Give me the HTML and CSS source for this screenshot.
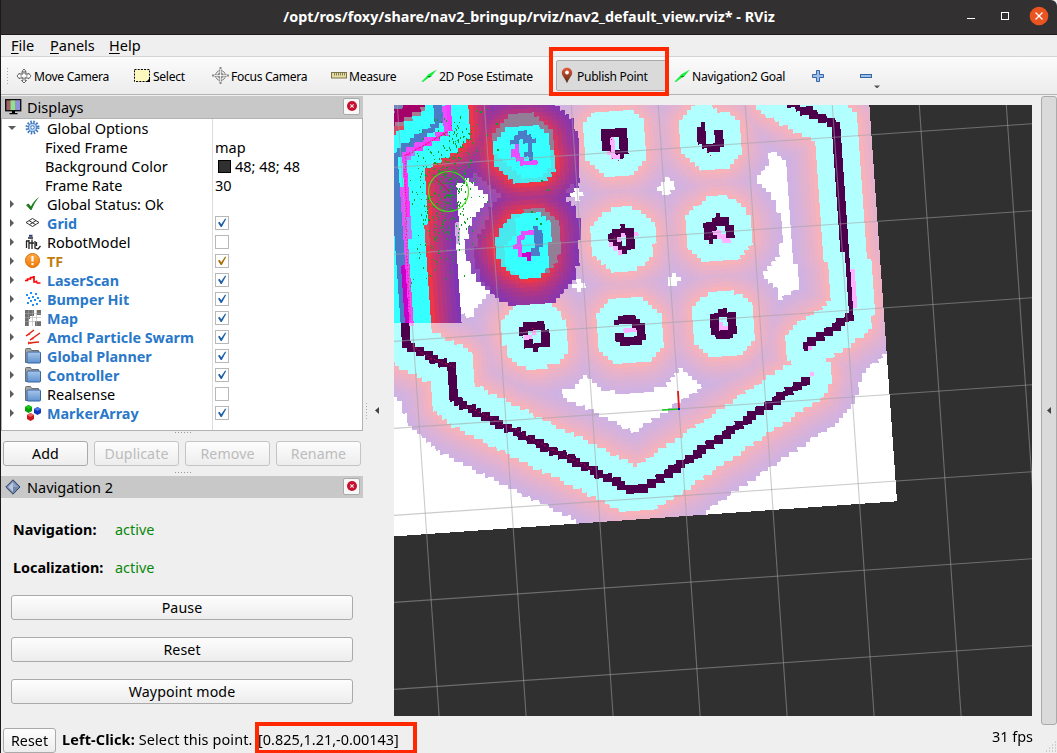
FILE: index.html
```html
<!DOCTYPE html>
<html lang="en">
<head>
<meta charset="utf-8">
<title>RViz</title>
<link rel="stylesheet" href="styles.css">
</head>
<body>
<svg class="defs" width="0" height="0" aria-hidden="true">
  <defs>
    <linearGradient id="pinFill" x1="0" y1="0" x2="0" y2="1"><stop offset="0" stop-color="#e5593c"/><stop offset="1" stop-color="#4e2a12"/></linearGradient>
    <linearGradient id="folderFill" x1="0" y1="0" x2="0" y2="1"><stop offset="0" stop-color="#a9c6ea"/><stop offset="1" stop-color="#5f92cf"/></linearGradient>
    <linearGradient id="tfFill" x1="0" y1="0" x2="0" y2="1"><stop offset="0" stop-color="#ffab4a"/><stop offset="1" stop-color="#f07800"/></linearGradient>
    <symbol id="folder" viewBox="0 0 16 16"><path d="M.5 14.5V1.5q0-1 1-1h4l1 2h7v12z" fill="#a5a7a2" stroke="#6c6e6a"/><rect x="2" y="4" width="13.5" height="11" rx="1" fill="url(#folderFill)" stroke="#3465a4"/></symbol>
    <symbol id="pose" viewBox="0 0 16 14"><path d="M.5 12.5 6 7l1-1.5L16 .5 10.500 7 8 8.500 2 13z" fill="#12f03c"/><path d="M6 7l4.500 0-2 1.500z" fill="#0b7a20"/></symbol>
    <symbol id="tick" viewBox="0 0 10 10"><path d="M1 4.800 2.600 3.800 4.200 6.300 8 .8h1.300L4.800 9H3.700z" fill="currentColor"/></symbol>
    <symbol id="close" viewBox="0 0 10 10"><circle cx="5" cy="5" r="5" fill="#c8102e"/><path d="M3.300 3.300l3.400 3.400M6.700 3.300L3.300 6.700" stroke="#f5dede" stroke-width="1.200"/></symbol>
  </defs>
</svg>
<div class="window">
  <header class="titlebar">
    <div class="title">/opt/ros/foxy/share/nav2_bringup/rviz/nav2_default_view.rviz* - RViz</div>
    <svg class="window-buttons" width="90" height="34" viewBox="0 0 90 34">
      <path d="M0 18.500h8" stroke="#fff"/><rect x="34.500" y="12.500" width="7" height="7" fill="none" stroke="#fff"/>
      <circle cx="72" cy="16" r="9.300" fill="#e95420"/><path d="M68.500 12.500l7 7M75.500 12.500l-7 7" stroke="#fff" stroke-width="1.300"/>
    </svg>
  </header>
  <nav class="menubar"><span class="m-file"><u>F</u>ile</span><span class="m-panels"><u>P</u>anels</span><span><u>H</u>elp</span></nav>
  <div class="toolbar">
    <i class="grip"></i>
    <div class="tool t-move"><svg width="16" height="16" viewBox="0 0 16 16"><path d="M8 1l2 2.500H9V6h3.500V5L15 8l-2.500 3v-1H9v2.500h1.500L8 15l-2.500-2.500H7V10H3.500v1L1 8l2.500-3v1H7V3.500H6z" fill="#fff" stroke="#555" stroke-width=".9"/><circle cx="8" cy="7" r="3.200" fill="none" stroke="#777" stroke-width=".8"/></svg><span>Move Camera</span></div>
    <div class="tool t-select"><svg width="17" height="14" viewBox="0 0 17 14"><rect x=".5" y=".5" width="15" height="12" fill="#fdf8bd" stroke="#000" stroke-dasharray="2 1.200"/><path d="M16 9v4h-4z"/></svg><span>Select</span></div>
    <div class="tool t-focus"><svg width="17" height="17" viewBox="0 0 17 17"><circle cx="8.500" cy="8.500" r="5" fill="#e6e6e6" stroke="#888"/><circle cx="8.500" cy="8.500" r="2.500" fill="none" stroke="#777"/><path d="M8.500 0v17M0 8.500h17" stroke="#888" stroke-width="2"/><path d="M8.500 2v13M2 8.500h13" stroke="#fff" stroke-width=".8"/></svg><span>Focus Camera</span></div>
    <div class="tool t-measure"><svg width="16" height="7" viewBox="0 0 16 7"><rect x=".5" y=".5" width="15" height="5.500" fill="#e8dda0" stroke="#7b754c"/><path d="M3.500 1v2.500M5.500 1v2.500M7.500 1v2.500M9.500 1v2.500M11.500 1v2.500M13.500 1v2.500" stroke="#6d6745" stroke-width=".8"/></svg><span>Measure</span></div>
    <div class="tool t-pose"><svg width="16" height="14"><use href="#pose"/></svg><span>2D Pose Estimate</span></div>
    <div class="tool t-publish"><svg width="12" height="17" viewBox="0 0 12 17"><path d="M6 .8c-3 0-5.200 2.200-5.200 5C.8 9 4.500 12 6 16.200 7.500 12 11.200 9 11.200 5.800c0-2.800-2.200-5-5.200-5z" fill="url(#pinFill)"/><circle cx="6" cy="5.500" r="1.900" fill="#fff"/></svg><span>Publish Point</span></div>
    <div class="tool t-goal"><svg width="16" height="14"><use href="#pose"/></svg><span>Navigation2 Goal</span></div>
    <svg class="t-plus" width="12" height="12" viewBox="0 0 12 12"><path d="M4.500.5h3v4h4v3h-4v4h-3v-4h-4v-3h4z" fill="#9dbfe8" stroke="#3465a4"/></svg>
    <svg class="t-minus" width="22" height="24" viewBox="0 0 22 24"><rect x=".5" y="10.500" width="11" height="3" fill="#9dbfe8" stroke="#3465a4"/><path d="M14 21.500h6l-3 3z" fill="#555"/></svg>
  </div>
  <main class="workspace">
    <aside class="docks">
      <div class="dock-title"><svg width="17" height="16" viewBox="0 0 17 16"><rect x=".7" y=".7" width="15" height="11" fill="#9f6262" stroke="#111" stroke-width="1.400"/><path d="M5.500 1.400h5v9.600h-5z" fill="#92df90"/><path d="M10.500 1.400H15V11h-4.500z" fill="#8f91df"/><path d="M7 12h3v2h2.500v1.300h-8V14H7z"/></svg><span>Displays</span><b class="close"><svg width="10" height="10"><use href="#close"/></svg></b></div>
      <div class="tree">
        <div class="row"><i class="open"></i><svg class="ic" viewBox="0 0 16 16"><circle cx="7.500" cy="7.500" r="5.700" fill="none" stroke="#3d78c0" stroke-width="2.600" stroke-dasharray="1.500 1.500"/><circle cx="7.500" cy="7.500" r="4.200" fill="#bcd4f0" stroke="#3d78c0"/><circle cx="7.500" cy="7.500" r="1.700" fill="#fff" stroke="#3d78c0"/></svg><span class="name">Global Options</span></div>
        <div class="row sub"><span class="name">Fixed Frame</span><span class="val">map</span></div>
        <div class="row sub"><span class="name">Background Color</span><span class="val"><i class="swatch"></i>48; 48; 48</span></div>
        <div class="row sub"><span class="name">Frame Rate</span><span class="val">30</span></div>
        <div class="row"><i class="shut"></i><svg class="ic" viewBox="0 0 16 16"><path d="M1 9l2.500-1.500L6 10.500Q8.500 5 14 1 9 7 6.500 14H5.500z" fill="#1e7a1e"/></svg><span class="name">Global Status: Ok</span></div>
        <div class="row on"><i class="shut"></i><svg class="ic" viewBox="0 0 16 16"><path d="M1 7.500L7.500 3.500 14 7.500 7.500 11.500zM4 5.600l6.500 4M11 5.600l-6.500 4" fill="none" stroke="#333"/></svg><span class="name">Grid</span><b class="check"><svg><use href="#tick"/></svg></b></div>
        <div class="row"><i class="shut"></i><svg class="ic" viewBox="0 0 16 16"><path d="M4 .8h3.500v2H4z" fill="#27417a"/><path d="M3 4h5M1.500 7v7M4 6v9M1 7h3M7 5.500V15M4 9h5M10 7v7l3 1 2.500-3M11.500 8v4" fill="none" stroke="#222" stroke-width="1.300"/></svg><span class="name">RobotModel</span><b class="check"></b></div>
        <div class="row warn"><i class="shut"></i><svg class="ic" viewBox="0 0 16 16"><circle cx="7.500" cy="7.500" r="7" fill="url(#tfFill)" stroke="#d96c00"/><path d="M7.500 3v5.500M7.500 10v2.200" stroke="#fff" stroke-width="2.200"/></svg><span class="name">TF</span><b class="check"><svg><use href="#tick"/></svg></b></div>
        <div class="row on"><i class="shut"></i><svg class="ic" viewBox="0 0 16 16"><path d="M0 8.500h2.500V7h3V5.500h3V4M9 4v6h2.500V8.500M11.500 11h4" fill="none" stroke="#f00" stroke-width="1.700"/></svg><span class="name">LaserScan</span><b class="check"><svg><use href="#tick"/></svg></b></div>
        <div class="row on"><i class="shut"></i><svg class="ic" viewBox="0 0 16 16"><path d="M5 1h2v2H5zM10 2h2v2h-2zM1 3h2v2H1zM7 5h2v2H7zM3 6h2v2H3zM12 6h2v2h-2zM9 8h2v2H9zM14 9h2v2h-2zM5 9h2v2H5zM2 11h2v2H2zM7 13h2v2H7zM11 12h2v2h-2z" fill="#1e90f5"/></svg><span class="name">Bumper Hit</span><b class="check"><svg><use href="#tick"/></svg></b></div>
        <div class="row on"><i class="shut"></i><svg class="ic" viewBox="0 0 16 16"><path d="M0 0h16v16H0z" fill="#fff"/><path d="M0 0h9v6H5v3H4v7H0zM12 0h4v5h-4zM10 11h6v5h-6z" fill="#6e6e6e"/><path d="M3.500 0v16M7.500 0v16M11.500 0v16M0 3.500h16M0 7.500h16M0 11.500h16" stroke="#aaa" stroke-opacity=".5"/></svg><span class="name">Map</span><b class="check"><svg><use href="#tick"/></svg></b></div>
        <div class="row on"><i class="shut"></i><svg class="ic" viewBox="0 0 16 16"><path d="M1 7l8-6M5 11l10-7M3 14l11-1" stroke="#dc2412" stroke-width="1.500"/><path d="M1.500 7l4-1.500-1-1.500zM5 11.500l4-1.500-1-2zM3 12.500v3l5-1.500z" fill="#ee3520"/></svg><span class="name">Amcl Particle Swarm</span><b class="check"><svg><use href="#tick"/></svg></b></div>
        <div class="row on"><i class="shut"></i><svg class="ic"><use href="#folder"/></svg><span class="name">Global Planner</span><b class="check"><svg><use href="#tick"/></svg></b></div>
        <div class="row on"><i class="shut"></i><svg class="ic"><use href="#folder"/></svg><span class="name">Controller</span><b class="check"><svg><use href="#tick"/></svg></b></div>
        <div class="row"><i class="shut"></i><svg class="ic"><use href="#folder"/></svg><span class="name">Realsense</span><b class="check"></b></div>
        <div class="row on"><i class="shut"></i><svg class="ic" viewBox="0 0 16 16"><path d="M0 2l3.500-2L7 2v4L3.500 8 0 6z" fill="#0a9d0a"/><path d="M0 2l3.500-2L7 2 3.500 4z" fill="#17c817"/><path d="M9 4l3.500-2L16 4v4l-3.500 2L9 8z" fill="#1436b8"/><path d="M9 4l3.500-2L16 4l-3.500 2z" fill="#4778e8"/><path d="M2 10l3.500-2L9 10v4l-3.500 2L2 14z" fill="#c81818"/><path d="M2 10l3.500-2L9 10l-3.500 2z" fill="#f06060"/></svg><span class="name">MarkerArray</span><b class="check"><svg><use href="#tick"/></svg></b></div>
      </div>
      <i class="hgrip"></i>
      <div class="actions"><button>Add</button><button disabled>Duplicate</button><button disabled>Remove</button><button disabled>Rename</button></div>
      <i class="hgrip second"></i>
      <div class="dock-title"><svg width="17" height="16" viewBox="0 0 17 16"><path d="M.8 8L8 .8 15 8 8 15.200z" fill="#7186ad" stroke="#34435f"/><path d="M3 8l5-5v10z" fill="#b9c8df"/><path d="M8 3l5 5H8z" fill="#8fa4c8"/></svg><span>Navigation 2</span><b class="close"><svg width="10" height="10"><use href="#close"/></svg></b></div>
      <section class="nav-panel">
        <div class="state"><b>Navigation:</b><span>active</span></div>
        <div class="state"><b>Localization:</b><span>active</span></div>
        <button>Pause</button><button>Reset</button><button>Waypoint mode</button>
      </section>
    </aside>
    <div class="splitter"><i class="grip"></i><i class="arrow"></i></div>
    <canvas class="view" id="view" width="638" height="611"></canvas>
    <div class="right-rail"><i class="arrow"></i></div>
  </main>
  <footer class="statusbar"><button>Reset</button><span class="hint"><b>Left-Click:</b> Select this point.</span><span class="coords">[0.825,1.21,-0.00143]</span><span class="fps">31 fps</span></footer>
  <div class="mark mark-tool"></div>
  <div class="mark mark-coords"></div>
  <svg class="sizegrip" width="12" height="12" viewBox="0 0 12 12"><path d="M10 1h1M7 4h1M10 4h1M4 7h1M7 7h1M10 7h1M1 10h1M4 10h1M7 10h1M10 10h1" stroke="#aaa"/></svg>
</div>
<script src="map.js"></script>
</body>
</html>
```
FILE: styles.css
```css
* { box-sizing: border-box; }
body { margin: 0; font: 14.5px/19px "Noto Sans", sans-serif; color: #000; }
.defs { position: absolute; }
.window { position: relative; width: 1057px; height: 753px; display: flex; flex-direction: column; overflow: hidden; background: #efefef; border-left: 1px solid #1c1a1c; }
.titlebar { position: relative; flex: none; height: 35px; background: #333031; border-bottom: 1px solid #1d1b1c; border-top-right-radius: 6px; display: flex; justify-content: center; }
.title { color: #fff; font-weight: 700; font-size: 14.35px; line-height: 33px; white-space: nowrap; }
.window-buttons { position: absolute; right: 0; top: 0; }
.menubar { flex: none; height: 22px; border-bottom: 1px solid #d4d4d4; display: flex; gap: 15px; padding-left: 10px; line-height: 20px; }
.menubar u { text-decoration-thickness: 1px; text-underline-offset: 2px; }
.m-file { width: 24px; }
.m-panels { width: 44px; }
.toolbar { flex: none; height: 38px; background: linear-gradient(#fbfbfb, #ececec); border-bottom: 1px solid #b5b5b5; display: flex; align-items: center; padding-left: 5px; font-size: 12.1px; letter-spacing: -0.3px; white-space: nowrap; }
.grip { width: 4px; height: 17px; background: radial-gradient(circle, #aaa 0.7px, transparent 0.9px) 0 0 / 3px 3px; }
.tool { display: flex; align-items: center; gap: 2px; flex: none; }
.tool svg { flex: none; }
.tool span { padding-top: 1px; }
.t-move { width: 118px; margin-left: 6px; }
.t-select { width: 78px; }
.t-focus { width: 119px; }
.t-measure { width: 90px; }
.t-pose { width: 135px; }
.t-publish { width: 112px; height: 31px; padding-left: 4px; gap: 4px; background: #dadada; border: 1px solid #aaa; border-radius: 2px; }
.t-goal { margin-left: 6px; width: 138px; }
.t-plus { flex: none; }
.t-minus { flex: none; margin-left: 36px; }
.workspace { flex: none; height: 630px; display: flex; padding-top: 1px; }
.docks { width: 362px; display: flex; flex-direction: column; }
.dock-title { flex: none; height: 22px; background: #c8c8c8; display: flex; align-items: center; padding-left: 4px; gap: 5px; }
.close { margin: 0 3px 2px auto; width: 17px; height: 17px; border: 1px solid #aaa; border-radius: 2px; background: #f8f8f8; display: grid; place-items: center; }
.tree { flex: none; height: 313px; border: 1px solid #b2b2b2; background: linear-gradient(#dcdcdc, #dcdcdc) 210px 0 / 1px 100% no-repeat #fff; }
.row { height: 19px; display: flex; align-items: center; padding-left: 6px; white-space: nowrap; }
.open, .shut { width: 8px; height: 8px; flex: none; margin: 0 9px 1px 0; }
.open { background: #5c5c5c; clip-path: polygon(0 25%, 100% 25%, 50% 75%); }
.shut { background: #5c5c5c; clip-path: polygon(25% 0, 75% 50%, 25% 100%); }
.ic { width: 16px; height: 16px; flex: none; margin-bottom: 1px; }
.name { width: 167px; margin-left: 6px; flex: none; }
.sub { padding-left: 37px; }
.row.on .name, .row.warn .name { font-weight: 700; color: #2a78c8; font-size: 14.35px; }
.row.warn .name { color: #c08010; }
.val { display: flex; align-items: center; padding-left: 3px; }
.swatch { width: 13px; height: 13px; margin: 0 4px 0 3px; border: 1px solid #000; background: #303030; }
.check { width: 14px; height: 14px; margin: 0 0 2px 1px; border: 1px solid #b8b8b8; background: #fff; color: #1c60a8; display: grid; place-items: center; }
.warn .check { color: #a67000; }
.check svg { width: 10px; height: 10px; }
.hgrip { flex: none; align-self: center; width: 17px; height: 2px; background: radial-gradient(circle, #999 0.6px, transparent 0.9px) 0 0 / 3px 3px; }
.actions { flex: none; display: flex; gap: 6px; padding-left: 2px; margin-top: 8px; height: 25px; }
.second { margin: 5px 0 3px; }
button { height: 25px; padding: 0; border: 1px solid #aaa; border-radius: 3px; background: linear-gradient(#fdfdfd, #ededed); color: #000; font: inherit; font-size: 14.2px; letter-spacing: 0.1px; }
.actions button { width: 85px; }
button:disabled { color: #bcbcbc; border-color: #c4c4c4; }
.nav-panel { padding: 12px 10px 0 10px; display: flex; flex-direction: column; }
.state { height: 38px; display: flex; align-items: center; font-size: 14.4px; padding-left: 2px; }
.state b { width: 102px; }
.state span { color: #0a870a; }
.nav-panel button { margin: 9px 0 8px; flex: none; }
.splitter { width: 31px; display: flex; align-items: center; padding-left: 2px; gap: 4px; }
.arrow { width: 4px; height: 7px; background: #444; clip-path: polygon(100% 0, 100% 100%, 0 50%); }
.splitter .arrow { margin-left: 2px; }
.view { display: block; width: 638px; height: 611px; margin-top: 9px; }
.right-rail { margin-left: 9px; width: 16px; height: 629px; border: 1px solid #aaa; border-radius: 3px; background: #dadada; display: flex; align-items: center; padding-left: 5px; }
.statusbar { flex: none; height: 28px; display: flex; padding: 3px 0 0 2px; line-height: 23px; font-size: 14.45px; white-space: nowrap; }
.statusbar button { width: 53px; flex: none; }
.hint { margin-left: 6px; width: 196px; flex: none; letter-spacing: 0.12px; }
.fps { margin-left: auto; margin-right: 24px; margin-top: -3px; }
.mark { position: absolute; border: 4px solid #ff2800; }
.mark-tool { left: 548px; top: 47px; width: 120px; height: 49px; }
.mark-coords { left: 254px; top: 722px; width: 162px; height: 32px; }
.sizegrip { position: absolute; right: 0; bottom: 0; }
```
FILE: map.js
```js
// Costmap view: cells rotated against the screen, coloured by distance to obstacles.
const canvas = document.getElementById('view');
const ctx = canvas.getContext('2d');
const OX = 394, OY = 105, W = 638, H = 611, CELL = 4.35, COLS = 134, ROWS = 128;
const corner = [897, 501.3], ux = -0.9976, uy = 0.0696, vx = -0.0696, vy = -0.9976;

const wall = (w, ...p) => ({ w, p });
const mapLines = [
  wall(3.2, 437,90, 438,125, 404,147, 395,157, 397,220, 404,323, 406,343),
  wall(4.1, 406,343, 412,348, 452,367, 454,398, 464,406, 628,488, 645,488, 682,464, 760,411, 808,379),
  wall(4, 776,95, 797,107, 812,113, 833,124, 838,130),
  wall(4.3, 837,128, 840,195, 843,240),
  wall(2.9, 844,240, 848,275, 850,315),
  wall(4, 849,317, 829,331, 805,345),
  wall(4.1, 606,147, 606,134, 615,131, 625,133, 625,147, 620,153),
  wall(4, 701,128, 702,141, 709,148), wall(4, 709,147, 718,146, 721,140, 720,132),
  wall(4.1, 613,240, 614,235, 622,230, 631,230, 632,244, 624,249, 617,243),
  wall(4.1, 707,227, 707,237, 713,238), wall(4.1, 714,226, 718,218, 727,222, 729,236),
  wall(4, 523,333, 528,326, 540,325, 544,333, 545,344, 535,346, 529,344),
  wall(4, 619,321, 629,319, 638,323, 641,329, 640,338, 633,343, 624,342, 619,336),
  wall(4, 714,331, 714,319, 722,313, 733,317, 733,331, 724,337, 716,334),
  wall(4.1, 515,142, 518,137, 524,136, 530,141, 530,156),
  wall(4.4, 536,231, 539,240, 536,252, 528,256),
];
const seenLines = [
  wall(1.8, 449,90, 449,132, 407,155, 407,190, 410,323),
  wall(2, 408,324, 409,340), wall(2.5, 422,349, 424,350),
  wall(2.6, 614,138, 611,152, 616,158, 623,158), wall(2.4, 622,232, 621,240, 613,245, 620,252), wall(2.2, 637,234, 638,236),
  wall(2.4, 714,232, 721,235, 726,241, 733,232), wall(2.2, 524,337, 524,344), wall(2.2, 534,332, 530,337), wall(2.2, 549,345, 550,345),
  wall(2.6, 627,331, 636,327), wall(2.2, 643,324, 643,334), wall(2.2, 623,344, 624,345),
  wall(2.6, 720,324, 726,329, 735,331), wall(2, 852,269, 854,305), wall(2.3, 809,349, 810,349), wall(2.3, 811,375, 812,375),
];
const localLines = [
  wall(3.2, 448,90, 447,131, 405,154, 405,200, 406,260, 409,326),
  wall(3, 517,145, 513,152, 519,160, 525,164, 533,162),
  wall(3.2, 531,233, 522,235, 518,245, 519,253, 529,257),
];

function segDist(x, y, a, b, c, d) {
  const dx = c - a, dy = d - b, t = Math.max(0, Math.min(1, ((x - a) * dx + (y - b) * dy) / (dx * dx + dy * dy)));
  return Math.hypot(x - a - t * dx, y - b - t * dy);
}
function hit(lines, x, y) {
  return lines.some(({ w, p }) => {
    for (let i = 0; i + 3 < p.length; i += 2) if (segDist(x, y, p[i], p[i + 1], p[i + 2], p[i + 3]) < w) return true;
    return false;
  });
}
const centre = (i, j) => [corner[0] + (i + .5) * CELL * ux + (j + .5) * CELL * vx, corner[1] + (i + .5) * CELL * uy + (j + .5) * CELL * vy];

const N = COLS * ROWS, isMap = new Uint8Array(N), isSeen = new Uint8Array(N), isLocal = new Uint8Array(N);
const globalPts = [], localPts = [];
for (let j = 0; j < ROWS; j++) for (let i = 0; i < COLS; i++) {
  const [x, y] = centre(i, j), k = j * COLS + i;
  isMap[k] = hit(mapLines, x, y);
  isSeen[k] = !isMap[k] && hit(seenLines, x, y);
  const pillar = isMap[k] && x > 505 && ((y > 145 && y < 164 && x < 545) || (y > 224 && y < 262 && x < 530));
  isLocal[k] = hit(localLines, x, y) ? 1 : pillar ? 2 : 0;
  if (isMap[k] || isSeen[k]) globalPts.push([i, j]);
  if (isLocal[k]) localPts.push([i, j]);
}
function nearest(pts, i, j) {
  let m = 400;
  for (const [a, b] of pts) { const d = (a - i) * (a - i) + (b - j) * (b - j); if (d < m) m = d; }
  return Math.sqrt(m) * 0.05;
}
function costColour(d) {
  if (d <= 0.225) return [0, 255, 255];
  if (d > 0.56) return null;
  const c = Math.exp(-3 * (d - 0.22));
  return [255 * c, 0, 255 * (1 - c)];
}
const mix = (a, b, t) => a.map((v, n) => v * t + b[n] * (1 - t));
const globalCol = [], localCol = [];
for (let j = 0; j < ROWS; j++) for (let i = 0; i < COLS; i++) {
  const k = j * COLS + i, [x, y] = centre(i, j);
  let base = isMap[k] ? [0, 0, 0] : [255, 255, 255];
  const lethal = isMap[k] || isSeen[k];
  const gd = nearest(globalPts, i, j);
  const g = lethal ? [255, 0, 255] : costColour(gd);
  base = g ? mix(g, base, .3) : base;
  globalCol[k] = base;
  let out = base;
  if (x < 592 && y < 330) {
    const pillarFive = x > 480 && y > 285 && gd <= .225;
    const ld = nearest(localPts, i, j);
    const l = isLocal[k] === 1 ? [255, 0, 255] : costColour(ld);
    if (l && !pillarFive) out = mix(l, base, .7);
    if (x > 480 && y < 285 && !lethal && gd <= .225 && ld > .225) out = [146, 126, 150];
    if (lethal && !pillarFive && isLocal[k] !== 1) out = isMap[k] ? [74, 124, 200] : [181, 123, 255];
    const s = x + 1.75 * y;
    if (x < 426 && y < 127) {
      if (s < 588) out = [116, 132, 184];
      else if (s < 612) out = [164, 0, 104];
      else if (s < 619) out = [165, 125, 145];
      else out = [53, 255, 255];
    }
  }
  localCol[k] = out;
}

const img = ctx.createImageData(W, H);
for (let py = 0; py < H; py++) for (let px = 0; px < W; px++) {
  const x = px + OX + .5, y = py + OY + .5, dx = x - corner[0], dy = y - corner[1];
  const i = Math.floor((dx * ux + dy * uy) / CELL), j = Math.floor((dx * vx + dy * vy) / CELL);
  let c = [48, 48, 48];
  if (i >= 0 && j >= 0 && i < COLS && j < ROWS) {
    const inLocal = y < 323 && x < 578 + (y - 118) * .025;
    c = (inLocal ? localCol : globalCol)[j * COLS + i];
  }
  const o = (py * W + px) * 4;
  img.data[o] = c[0]; img.data[o + 1] = c[1]; img.data[o + 2] = c[2]; img.data[o + 3] = 255;
}
ctx.putImageData(img, 0, 0);
ctx.translate(-OX, -OY);

function line(colour, width, a, b, c, d) {
  ctx.strokeStyle = colour; ctx.lineWidth = width;
  ctx.beginPath(); ctx.moveTo(a, b); ctx.lineTo(c, d); ctx.stroke();
}
// Ground grid, one metre per square.
for (let k = 0; k < 8; k++) line('rgba(160,160,164,.55)', 1.1, 397.3 + 87 * k, 105, 439.1 + 87 * k, 716);
for (let k = 0; k < 7; k++) line('rgba(160,160,164,.55)', 1.1, 394, 167.4 + 87 * k, 1032, 123.7 + 87 * k);

// Particle cloud.
let seed = 41;
const rnd = () => (seed = (seed * 16807) % 2147483647) / 2147483647;
const gauss = () => (rnd() + rnd() + rnd() + rnd() - 2) * 1.73;
ctx.fillStyle = '#08a020';
for (let n = 0; n < 500; n++) {
  const gy = gauss(), x = 447 + gauss() * 15 - gy * 3, y = 189 + gy * 38;
  if (y > 107 && x > 396) ctx.fillRect(Math.round(x), Math.round(y), 1, rnd() > .5 ? 2 : 1);
}
for (const [x, y] of [[541,180],[547,189],[497,149],[536,218],[540,223],[531,211],[480,111],[496,123]]) ctx.fillRect(x, y, 2, 2);
ctx.strokeStyle = '#3fe31c'; ctx.lineWidth = 1.2;
ctx.beginPath(); ctx.arc(448.500, 191.500, 20, 0, 7); ctx.stroke();
line('#c02030', 1, 435, 178, 450, 192);

// Laser returns along the walls.
ctx.fillStyle = '#e01030';
function returns(step, ...p) {
  for (let s = 0; s + 3 < p.length; s += 2) for (let t = 0; t < 1; t += step)
    ctx.fillRect(p[s] + (p[s + 2] - p[s]) * t + rnd() * 1.500, p[s + 1] + (p[s + 3] - p[s + 1]) * t + rnd(), 1, 1);
}
returns(.035, 446,131, 404,155, 405,230, 408,320);
returns(.12, 411,345, 430,358, 453,366);
returns(.09, 466,406, 510,427, 552,449, 590,468);
for (const [x, y] of [[611,139],[610,151],[612,158],[618,160],[707,151],[710,155],[614,237],[617,244],[621,249],[709,236],[709,242],[526,331],[532,328],[522,337]]) ctx.fillRect(x, y, 1, 1);

// Map frame axes.
line('#19c819', 1.6, 662, 410, 679, 409);
line('#e01818', 1.8, 678, 391, 679, 409);
ctx.fillStyle = '#1818c0'; ctx.fillRect(678, 408, 2, 2);
```
